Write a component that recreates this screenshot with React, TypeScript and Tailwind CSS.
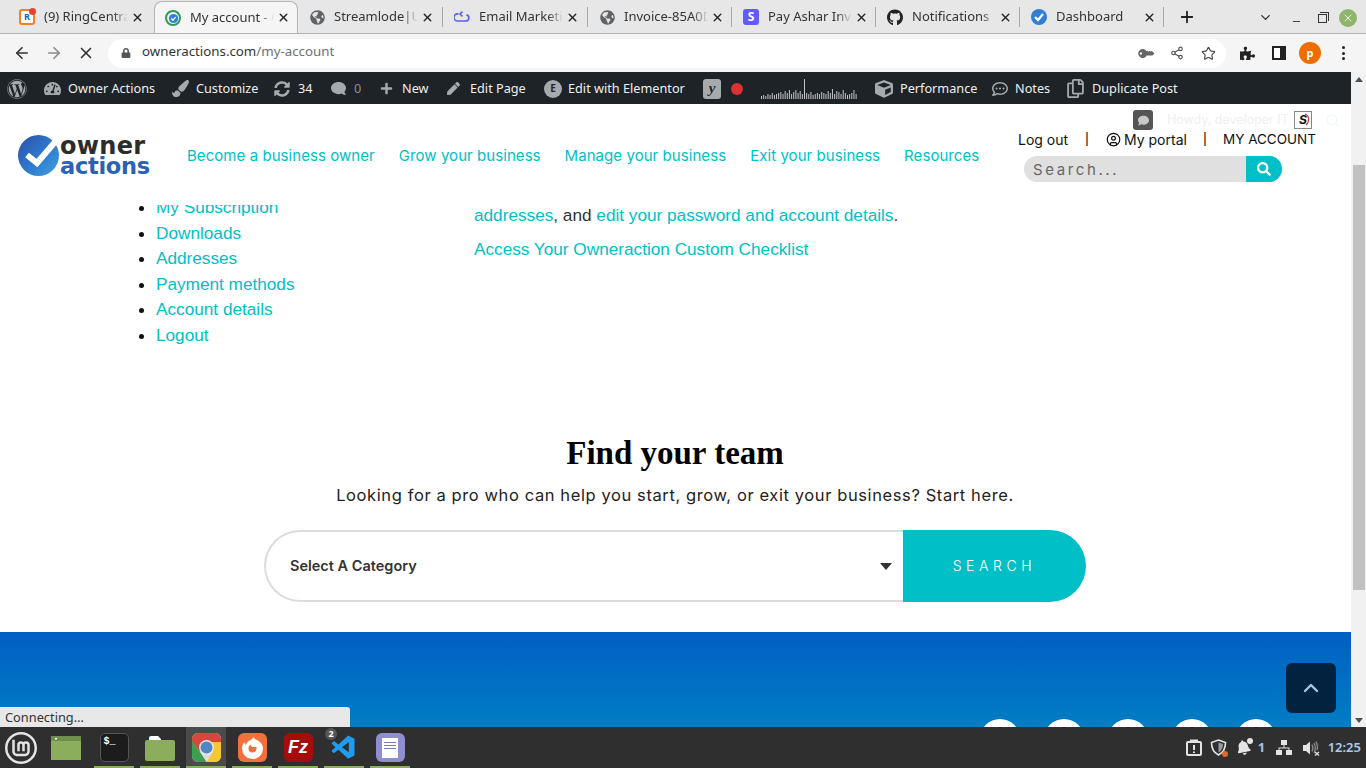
import { ArrowLeft, ArrowRight, X, Plus, ChevronDown, ChevronUp, Minus, Star, Share2, Search, CircleUser } from "lucide-react";
import { FaWordpress, FaGithub, FaPuzzlePiece, FaKey, FaLock, FaComment, FaPlus, FaPen, FaSyncAlt, FaPaintBrush, FaTachometerAlt, FaRegCommentDots, FaRegCopy, FaGlobeAmericas, FaCube, FaSearch, FaBell } from "react-icons/fa";
import { SiLinuxmint } from "react-icons/si";
import { VscVscode } from "react-icons/vsc";

const uiFont = "font-['Noto_Sans',sans-serif]";
const pageFont = "font-['Inter',sans-serif]";

const CheckBadge = ({ size = 16 }: { size?: number }) => (
  <svg width={size} height={size} viewBox="0 0 16 16">
    <circle cx="8" cy="8" r="8" fill="#2f7fd6" />
    <path d="M4 8l3 3 5-6" fill="none" stroke="#fff" strokeWidth="2.2" />
  </svg>
);

const tabs = [
  { title: "(9) RingCentral", icon: <RingIcon />, width: "w-[146px]", sep: false },
  { title: "My account - Owner Actions", icon: <AccountIcon />, width: "w-[144px]", sep: false, active: true },
  { title: "Streamlode|Upload", icon: <FaGlobeAmericas className="text-[15px] text-[#5f6368]" />, width: "w-[145px]", sep: true },
  { title: "Email Marketing", icon: <EmailIcon />, width: "w-[145px]", sep: true },
  { title: "Invoice-85A0D", icon: <FaGlobeAmericas className="text-[15px] text-[#5f6368]" />, width: "w-[144px]", sep: true },
  { title: "Pay Ashar Invoice", icon: <StripeIcon />, width: "w-[144px]", sep: true },
  { title: "Notifications", icon: <FaGithub className="text-[17px] text-[#222]" />, width: "w-[144px]", sep: true },
  { title: "Dashboard", icon: <CheckBadge />, width: "w-[144px]", sep: true },
];

function RingIcon() {
  return (
    <span className="relative flex h-[16px] w-[16px] items-center justify-center rounded-[3px] border-2 border-[#f58220] bg-white text-[9px] font-bold text-[#0a6fc2]">
      R
      <span className="absolute -right-[3px] -top-[3px] h-[7px] w-[7px] rounded-full bg-[#e8432e]" />
    </span>
  );
}

function AccountIcon() {
  return (
    <svg width="16" height="16" viewBox="0 0 16 16">
      <circle cx="8" cy="8" r="7" fill="none" stroke="#2d9a56" strokeWidth="2" />
      <circle cx="8.5" cy="8.5" r="4.6" fill="#2f7fd6" />
      <path d="M6.3 8.4l1.7 1.7 2.6-3" fill="none" stroke="#fff" strokeWidth="1.4" />
    </svg>
  );
}

function EmailIcon() {
  return (
    <svg width="18" height="16" viewBox="0 0 18 16" fill="none" stroke="#5a62e8" strokeWidth="1.8">
      <path d="M5 4.5H4a3.5 3.5 0 0 0 0 8h9a3.5 3.5 0 0 0 1-6.9" />
      <path d="M9.5 2l-2.8 2.6 2.8 2.6" />
    </svg>
  );
}

function StripeIcon() {
  return (
    <span className="flex h-[16px] w-[16px] items-center justify-center rounded-[3px] bg-[#635bff] text-[12px] font-bold text-white">S</span>
  );
}

const BrowserTab = ({ tab }: { tab: (typeof tabs)[number] }) => (
  <div className={`flex h-[32px] shrink-0 items-center ${tab.width} ${tab.active ? "rounded-t-[8px] border border-b-0 border-[#b5b5b5] bg-[#f5f5f5] pl-[10px]" : "pl-[11px]"}`}>
    <span className="flex w-[16px] shrink-0 items-center justify-center">{tab.icon}</span>
    <span className="ml-[9px] w-[84px] shrink-0 overflow-hidden whitespace-nowrap text-[13px] text-[#333] [mask-image:linear-gradient(to_right,black_82%,transparent)]">
      {tab.title}
    </span>
    <X size={13} strokeWidth={2.6} className="ml-[3px] shrink-0 text-[#222]" />
    {tab.sep && <span className="ml-auto h-[20px] w-px bg-[#a8a8a8]" />}
  </div>
);

const TabStrip = () => (
  <div className={`flex h-[34px] items-end border-b border-[#b3b3b3] bg-[#e7e7e7] pl-[8px] ${uiFont}`}>
    {tabs.map((tab) => (
      <BrowserTab key={tab.title} tab={tab} />
    ))}
    <Plus size={18} strokeWidth={2.4} className="mb-[7px] ml-[14px] text-[#222]" />
    <ChevronDown size={15} strokeWidth={2.2} className="mb-[8px] ml-[62px] text-[#333]" />
    <Minus size={11} strokeWidth={2} className="mb-[6px] ml-[18px] text-[#333]" />
    <span className="relative mb-[10px] ml-[16px] h-[9px] w-[9px] border border-[#333]">
      <span className="absolute -right-[3px] -top-[3px] h-[9px] w-[9px] border-r border-t border-[#333]" />
    </span>
    <span className="mb-[6px] ml-[12px] flex h-[18px] w-[18px] items-center justify-center rounded-full bg-[#8fb56a]">
      <X size={12} strokeWidth={1.6} className="text-white" />
    </span>
  </div>
);

const AddressBar = () => (
  <div className={`flex h-[38px] items-center bg-[#f5f5f5] ${uiFont}`}>
    <ArrowLeft size={18} strokeWidth={2.2} className="ml-[13px] text-[#333]" />
    <ArrowRight size={18} strokeWidth={2.2} className="ml-[14px] text-[#8a8a8a]" />
    <X size={18} strokeWidth={2.2} className="ml-[14px] text-[#333]" />
    <div className="ml-[13px] flex h-[29px] w-[1118px] items-center rounded-full bg-white">
      <FaLock className="ml-[13px] text-[10px] text-[#555]" />
      <span className="-mt-[2px] ml-[11px] text-[13.3px] text-[#333]">
        owneractions.com<span className="text-[#707070]">/my-account</span>
      </span>
      <FaKey className="ml-auto -rotate-[135deg] text-[13px] text-[#666]" />
      <Share2 size={14} strokeWidth={2} className="ml-[18px] text-[#555]" />
      <Star size={15} strokeWidth={1.8} className="ml-[17px] mr-[10px] text-[#444]" />
    </div>
    <FaPuzzlePiece className="ml-[14px] text-[15px] text-[#222]" />
    <span className="ml-[17px] h-[14px] w-[14px] border-2 border-r-[6px] border-[#222] bg-white" />
    <span className="ml-[13px] flex h-[22px] w-[22px] items-center justify-center rounded-full bg-[#ef6c00] text-[11px] font-bold text-white">p</span>
    <span className="ml-[21px] flex flex-col gap-[2.5px]">
      <span className="h-[3px] w-[3px] rounded-full bg-[#222]" />
      <span className="h-[3px] w-[3px] rounded-full bg-[#222]" />
      <span className="h-[3px] w-[3px] rounded-full bg-[#222]" />
    </span>
  </div>
);

const chartBars = [3, 4, 3, 5, 4, 6, 4, 5, 6, 7, 5, 8, 6, 9, 5, 7, 9, 6, 8, 5, 20, 6, 5, 7, 4, 5, 6, 5, 7, 6, 5, 8, 6, 10, 5, 8, 7, 5, 9, 6, 4, 5, 6, 9, 5];

const AdminBar = () => (
  <div className={`flex h-[32px] shrink-0 items-center bg-[#1d2327] pt-[1px] text-[12.7px] text-[#f0f0f1] ${uiFont}`}>
    <FaWordpress className="ml-[7px] text-[20px] text-[#a7aaad]" />
    <FaTachometerAlt className="ml-[17px] text-[17px] text-[#a7aaad]" />
    <span className="ml-[7px] w-[87px] whitespace-nowrap">Owner Actions</span>
    <FaPaintBrush className="ml-[17px] text-[17px] text-[#a7aaad]" />
    <span className="ml-[7px] w-[61px]">Customize</span>
    <FaSyncAlt className="ml-[17px] text-[16px] text-[#a7aaad]" />
    <span className="ml-[8px] w-[15px]">34</span>
    <FaComment className="ml-[18px] -scale-x-100 text-[15px] text-[#a7aaad]" />
    <span className="ml-[8px] w-[7px] text-[#8c8f94]">0</span>
    <FaPlus className="ml-[19px] text-[13px] text-[#a7aaad]" />
    <span className="ml-[9px] w-[27px]">New</span>
    <FaPen className="ml-[18px] text-[13px] text-[#a7aaad]" />
    <span className="ml-[10px] w-[55px] whitespace-nowrap">Edit Page</span>
    <span className="ml-[19px] flex h-[18px] w-[18px] items-center justify-center rounded-full bg-[#a7aaad] text-[10px] font-bold text-[#1d2327]">E</span>
    <span className="ml-[6px] w-[117px] whitespace-nowrap">Edit with Elementor</span>
    <span className="ml-[18px] flex h-[20px] w-[18px] items-center justify-center rounded-[3px] bg-[#a7aaad] font-['Liberation_Serif',serif] text-[15px] font-bold italic text-[#1d2327]">y</span>
    <span className="ml-[10px] h-[12px] w-[12px] rounded-full bg-[#dc3232]" />
    <svg width="96" height="22" viewBox="0 0 96 22" className="ml-[18px]">
      {chartBars.map((h, i) => (
        <rect key={i} x={i * 2.15} y={21 - h} width="1" height={h} fill="#c3c4c7" />
      ))}
    </svg>
    <FaCube className="ml-[18px] text-[18px] text-[#a7aaad]" />
    <span className="ml-[7px] w-[76px]">Performance</span>
    <FaRegCommentDots className="ml-[16px] text-[16px] text-[#a7aaad]" />
    <span className="ml-[7px] w-[36px]">Notes</span>
    <FaRegCopy className="ml-[15px] text-[19px] text-[#a7aaad]" />
    <span className="ml-[7px] whitespace-nowrap">Duplicate Post</span>
  </div>
);

const Logo = () => (
  <div className="flex h-[41px] w-[132px] shrink-0 items-center">
    <svg width="42" height="41" viewBox="0 0 42 41" className="shrink-0">
      <defs>
        <linearGradient id="logoFill" x1="0" y1="0" x2="1" y2="1">
          <stop offset="0" stopColor="#2d4fa8" />
          <stop offset="0.6" stopColor="#2f7fd0" />
          <stop offset="1" stopColor="#43a4e0" />
        </linearGradient>
      </defs>
      <circle cx="20.5" cy="20.5" r="20.5" fill="url(#logoFill)" />
      <path d="M9 20l10 8L37 7" fill="none" stroke="#fff" strokeWidth="6" />
    </svg>
    <div className="flex flex-col font-['DejaVu_Sans',sans-serif] font-bold">
      <span className="h-[20px] text-[24px] leading-[20px] tracking-[0.3px] text-[#2c2c2c]">owner</span>
      <span className="h-[20px] text-[22.5px] leading-[20px] tracking-[-0.3px] text-[#2a62b4]">actions</span>
    </div>
  </div>
);

const navLinks = ["Become a business owner", "Grow your business", "Manage your business", "Exit your business", "Resources"];

const SiteHeader = () => (
  <header className={`relative z-10 flex h-[101px] shrink-0 items-start bg-white pl-[18px] ${pageFont}`}>
    <div className="mt-[31px]">
      <Logo />
    </div>
    <nav className="ml-[37px] mt-[41px] flex gap-[24px] text-[15px] leading-[22px] tracking-[0.06px] text-[#00bfc7]">
      {navLinks.map((link) => (
        <span key={link} className="whitespace-nowrap">{link}</span>
      ))}
    </nav>
    <div className="ml-auto mr-[35px] mt-[25px] w-[298px] shrink-0">
      <div className="flex h-[20px] items-center whitespace-nowrap text-[14px] text-[#111]">
        <span className="w-[51px]">Log out</span>
        <span className="ml-[17px] h-[14px] w-[2px] bg-[#c4691c]" />
        <CircleUser size={15} strokeWidth={2} className="ml-[18px]" />
        <span className="ml-[3px] w-[63px]">My portal</span>
        <span className="ml-[17px] h-[14px] w-[2px] bg-[#c4691c]" />
        <span className="ml-[17px] text-[13.5px]">MY ACCOUNT</span>
      </div>
      <div className="ml-[6px] mt-[7px] flex h-[26px] w-[258px] overflow-hidden rounded-full bg-[#e0e0e0]">
        <span className="ml-[9px] flex-1 pt-[1px] text-[15px] leading-[26px] tracking-[2.6px] text-[#666]">Search...</span>
        <span className="flex w-[36px] items-center justify-center bg-[#00bfc7]">
          <FaSearch className="text-[14px] text-white" />
        </span>
      </div>
    </div>
    {/* admin bar flyout fading out over the header */}
    <div className="absolute left-[1133px] top-[6px] flex items-center">
      <span className="flex h-[20px] w-[20px] items-center justify-center rounded-[3px] bg-[#555]">
        <FaComment className="text-[11px] text-[#c8c8c8]" />
      </span>
      <span className="ml-[14px] w-[127px] whitespace-nowrap pt-[1px] text-[12.5px] text-[#f0f0f0]">Howdy, developer IT</span>
      <span className="relative flex h-[18px] w-[18px] items-center justify-center border border-[#888] text-[12px] font-bold italic leading-none text-[#111]">
        S
        <svg width="16" height="16" viewBox="0 0 16 16" className="absolute inset-0">
          <path d="M10 2c4 1 5 7 1 11" fill="none" stroke="#e0342c" strokeWidth="1.2" />
        </svg>
      </span>
      <Search size={15} strokeWidth={2} className="ml-[13px] text-[#eef5fa]" />
    </div>
  </header>
);

const accountLinks = ["My Subscription", "Downloads", "Addresses", "Payment methods", "Account details", "Logout"];

const AccountSection = () => (
  <div className="-mt-[10px] flex font-['Liberation_Sans',sans-serif] text-[17.2px] leading-[25.5px]">
    <ul className="w-[474px] shrink-0 list-disc pl-[156px] text-[#00bfc7] marker:text-[#111]">
      {accountLinks.map((link) => (
        <li key={link}>{link}</li>
      ))}
    </ul>
    <div className="mt-[8px] text-[#00bfc7]">
      <p>
        addresses<span className="text-[#333]">, and </span>edit your password and account details<span className="text-[#333]">.</span>
      </p>
      <p className="mt-[8.5px]">Access Your Owneraction Custom Checklist</p>
    </div>
  </div>
);

const FindTeam = () => (
  <section className="mt-[85px] flex flex-col items-center pr-[1px]">
    <h2 className="font-['Liberation_Serif',serif] text-[33px] font-bold leading-[40px] text-black">Find your team</h2>
    <p className={`mt-[10px] text-[16.5px] leading-[24px] tracking-[0.6px] text-[#222] ${pageFont}`}>
      Looking for a pro who can help you start, grow, or exit your business? Start here.
    </p>
    <div className={`mt-[23px] flex h-[72px] w-[822px] ${pageFont}`}>
      <div className="flex flex-1 items-center rounded-l-full border-2 border-r-0 border-[#dcdcdc] pl-[24px] pr-[11px]">
        <span className="text-[14.5px] font-semibold text-[#333]">Select A Category</span>
        <span className="ml-auto h-0 w-0 border-x-[6px] border-t-[7px] border-x-transparent border-t-[#333]" />
      </div>
      <button className="flex w-[183px] items-center justify-center rounded-r-full bg-[#00bfc7] pb-[2px] text-[14px] font-light tracking-[4.6px] text-white">
        SEARCH
      </button>
    </div>
  </section>
);

const Footer = () => (
  <footer className="mt-[30px] flex flex-1 items-start justify-end gap-[24px] bg-gradient-to-b from-[#005fc4] to-[#0087c3] pr-[75px] pt-[87px]">
    {[0, 1, 2, 3, 4].map((i) => (
      <span key={i} className="h-[40px] w-[40px] shrink-0 rounded-full bg-white" />
    ))}
  </footer>
);

const Scrollbar = () => (
  <div className="flex w-[15px] shrink-0 flex-col items-center bg-[#f1f1f1]">
    <span className="mt-[5px] h-0 w-0 border-x-[4px] border-b-[5px] border-x-transparent border-b-[#505050]" />
    <span className="mt-[83px] h-[425px] w-[12px] bg-[#c1c1c1]" />
    <span className="mb-[4px] mt-auto h-0 w-0 border-x-[4px] border-t-[5px] border-x-transparent border-t-[#505050]" />
  </div>
);

const ChromeIcon = () => (
  <svg width="29" height="29" viewBox="0 0 29 29">
    <rect width="29" height="29" rx="6" fill="#ddd" />
    <path d="M0 6a6 6 0 0 1 6-6h17a6 6 0 0 1 6 6v3H14.5L8 19 0 9z" fill="#d8483a" />
    <path d="M0 8l8 11 6.5 10H6a6 6 0 0 1-6-6z" fill="#3f9e4d" />
    <path d="M14.5 9H29v14a6 6 0 0 1-6 6h-8.5L21 19z" fill="#f5c92f" />
    <circle cx="14.5" cy="14.5" r="7.5" fill="#e8e8e8" />
    <circle cx="14.5" cy="14.5" r="6" fill="#4f86c6" />
  </svg>
);

const FirefoxIcon = () => (
  <svg width="29" height="29" viewBox="0 0 29 29">
    <rect width="29" height="29" rx="6" fill="#f4703a" />
    <path d="M15 4c1 2 3 2.500 5 3.500 3.500 2 5 5 5 8a10.500 10.500 0 0 1-21 0c0-2.500 1-5 2.500-6.500 0 1.500.5 2.500 1.500 3 .5-3 3-4 4.500-5C14 6 15 5.500 15 4z" fill="#fff" />
    <circle cx="14.500" cy="15.500" r="4" fill="#f4703a" />
    <path d="M12 11h6l1 3h-5z" fill="#fff" />
  </svg>
);

const FolderIcon = () => (
  <svg width="30" height="26" viewBox="0 0 30 26">
    <path d="M4 3a2 2 0 0 1 2-2h7l3 3v4H4z" fill="#fff" />
    <rect x="0" y="5" width="30" height="21" rx="2" fill="#8aae5c" />
  </svg>
);

const FilesIcon = () => (
  <svg width="30" height="24" viewBox="0 0 30 24">
    <rect width="30" height="24" fill="#8aae5c" />
    <rect width="30" height="5" fill="#6f8f4c" />
    <rect x="4" y="2" width="2" height="1.500" fill="#fff" />
  </svg>
);

const ClipboardAlert = () => (
  <svg width="16" height="17" viewBox="0 0 16 17" fill="none" stroke="#e4e4e4" strokeWidth="2">
    <rect x="1" y="3" width="14" height="13" rx="1" />
    <path d="M5 3V1.500h6V3" />
    <path d="M8 6v5M8 12.500v1.500" />
  </svg>
);

const ShieldAlert = () => (
  <span className="relative block h-[17px] w-[17px]">
    <svg width="17" height="17" viewBox="0 0 17 17">
      <path d="M8.500 1l7 2.500c0 6-2 10-7 12.500-5-2.500-7-6.500-7-12.500z" fill="none" stroke="#e4e4e4" strokeWidth="1.600" />
      <path d="M8.500 3.500l4.500 1.500c0 4-1.500 6.500-4.500 8.500z" fill="#9a9a9a" />
    </svg>
    <span className="absolute -bottom-[1px] -right-[1px] h-[6px] w-[6px] rounded-full bg-[#e06a2c]" />
  </span>
);

const NetworkTree = () => (
  <svg width="16" height="15" viewBox="0 0 16 15" fill="#e4e4e4">
    <rect x="5" y="0" width="6" height="5" />
    <rect x="0" y="10" width="6" height="5" />
    <rect x="10" y="10" width="6" height="5" />
    <path d="M7.500 5h1v2.500H13.500V10h-1V8.500h-9V10h-1V7.500h5z" />
  </svg>
);

const VolumeMuted = () => (
  <svg width="18" height="16" viewBox="0 0 18 16" fill="none">
    <path d="M1 5h3l4-3.500v13L4 11H1z" fill="#e4e4e4" />
    <path d="M10 4.500c1 2 1 5 0 7M12 3c1.500 3 1.500 7 0 10M14 1.500c1.500 3 1.800 6 1 8.500" stroke="#8a8a8a" strokeWidth="1.300" />
    <path d="M13 12l4 3.500M17 12l-4 3.500" stroke="#e4e4e4" strokeWidth="1.300" />
  </svg>
);

const DockSlot = ({ children, active, bar = true, className = "" }: { children: React.ReactNode; active?: boolean; bar?: boolean; className?: string }) => (
  <div className={`relative flex h-[41px] w-[40px] shrink-0 items-center justify-center ${active ? "bg-[#4b4b4b]" : ""} ${className}`}>
    {children}
    {bar && <span className="absolute inset-x-0 bottom-0 h-[2px] bg-[#8aae5c]" />}
  </div>
);

const Taskbar = () => (
  <div className={`flex h-[41px] shrink-0 items-center bg-[#2f2f2f] pl-[5px] ${uiFont}`}>
    <SiLinuxmint className="text-[32px] text-[#e4e4e4]" />
    <div className="ml-[9px] flex gap-[6px]">
      <DockSlot bar={false} className="mr-[2px]">
        <FilesIcon />
      </DockSlot>
      <DockSlot>
        <span className="flex h-[29px] w-[29px] items-start rounded-[5px] border border-[#555] bg-[#1c1c1c] pl-[3px] font-['Liberation_Mono',monospace] text-[10px] font-bold text-white">$_</span>
      </DockSlot>
      <DockSlot>
        <FolderIcon />
      </DockSlot>
      <DockSlot active>
        <ChromeIcon />
      </DockSlot>
      <DockSlot>
        <FirefoxIcon />
      </DockSlot>
      <DockSlot>
        <span className="flex h-[29px] w-[29px] items-center justify-center rounded-[6px] bg-[#a50d0d] font-['Liberation_Sans',sans-serif] text-[18px] font-bold italic text-white">Fz</span>
      </DockSlot>
      <DockSlot>
        <VscVscode className="text-[28px] text-[#1f9cf0]" />
        <span className="absolute left-[1px] top-[1px] flex h-[12px] w-[12px] items-center justify-center rounded-full bg-[#555] text-[9px] font-bold text-white">2</span>
      </DockSlot>
      <DockSlot>
        <span className="flex h-[29px] w-[29px] items-center justify-center rounded-[6px] bg-[#8f8fd0]">
          <span className="flex h-[20px] w-[16px] flex-col gap-[2px] bg-white px-[2px] pt-[4px]">
            <span className="h-px bg-[#7a7ab8]" />
            <span className="h-px bg-[#7a7ab8]" />
            <span className="h-px bg-[#7a7ab8]" />
          </span>
        </span>
      </DockSlot>
    </div>
    <div className="ml-auto flex items-center pr-[5px] text-[#e4e4e4]">
      <ClipboardAlert />
      <span className="ml-[8px]"><ShieldAlert /></span>
      <span className="relative ml-[9px]">
        <FaBell className="-rotate-12 text-[15px]" />
        <span className="absolute -right-[2px] -top-[2px] h-[6px] w-[6px] rounded-full bg-[#e4e4e4]" />
      </span>
      <span className="ml-[7px] w-[8px] text-[13px] font-bold text-[#9cc4e8]">1</span>
      <span className="ml-[10px]"><NetworkTree /></span>
      <span className="ml-[10px]"><VolumeMuted /></span>
      <span className="ml-[8px] text-[13px] font-semibold text-[#a9cdee]">12:25</span>
    </div>
  </div>
);

const App = () => {
  return (
    <div className="flex h-screen w-full flex-col overflow-hidden bg-white">
      <TabStrip />
      <AddressBar />
      <div className="flex min-h-0 flex-1">
        <div className="relative flex min-w-0 flex-1 flex-col overflow-hidden">
          <AdminBar />
          <SiteHeader />
          <AccountSection />
          <FindTeam />
          <Footer />
          <div className={`absolute bottom-0 left-0 flex h-[20px] w-[350px] items-center rounded-tr-[3px] bg-[#e8e8e8] pl-[5px] pt-[1px] text-[12.8px] text-[#333] ${uiFont}`}>
            Connecting…
          </div>
          <button className="absolute bottom-[14px] right-[15px] flex h-[50px] w-[50px] items-center justify-center rounded-[6px] bg-[#012340]">
            <ChevronUp size={24} strokeWidth={2.4} className="text-[#a9c6e0]" />
          </button>
        </div>
        <Scrollbar />
      </div>
      <Taskbar />
    </div>
  );
};

export default App;
